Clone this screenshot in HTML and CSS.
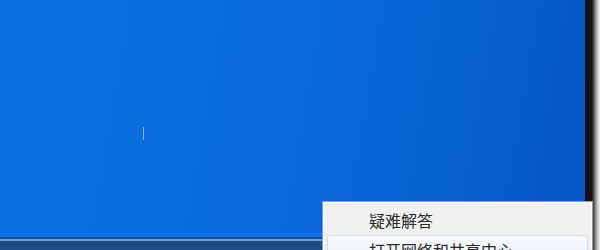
FILE: index.html
```html
<!DOCTYPE html>
<html lang="zh-CN">
<head>
<meta charset="utf-8">
<link rel="stylesheet" href="styles.css">
</head>
<body>
<div class="screen">
  <div class="desktop">
    <div class="wall">
      <span class="cursor"></span>
    </div>
    <div class="taskbar">
      <div class="tb-glow"></div>
      <div class="tb-dark"></div>
      <div class="tb-line"></div>
      <div class="tb-body"></div>
    </div>
  </div>
  <div class="edge"></div>
  <div class="menu">
    <div class="item">疑难解答</div>
    <div class="item hover">打开网络和共享中心</div>
  </div>
</div>
</body>
</html>
```
FILE: styles.css
```css
html, body {
  margin: 0;
  padding: 0;
  background: #000;
}
.screen {
  position: relative;
  width: 600px;
  height: 250px;
  display: flex;
  overflow: hidden;
}
.desktop {
  flex: 1;
  display: flex;
  flex-direction: column;
}
.wall {
  position: relative;
  flex: 1;
  background: linear-gradient(100deg, #0b72e2 0%, #0a6ddc 35%, #0863d3 70%, #0557c4 100%);
}
.cursor {
  position: absolute;
  left: 143px;
  top: 127px;
  width: 1px;
  height: 13px;
  background: #8fb4e8;
}
.taskbar {
  display: flex;
  flex-direction: column;
  height: 18px;
}
.tb-glow {
  height: 5px;
  background: #0d70ea;
}
.tb-dark {
  height: 2px;
  background: #1a4f8c;
}
.tb-line {
  height: 2px;
  background: #7a9cc4;
}
.tb-body {
  flex: 1;
  background: #1d4b85;
}
.edge {
  width: 15px;
  background: linear-gradient(90deg, #111 0%, #141414 45%, #555 60%, #bbb 80%, #f2f2f2 100%);
}
.menu {
  position: absolute;
  left: 322px;
  top: 201px;
  width: 261px;
  height: 60px;
  background: #f0f0f0;
  border: 1px solid #9a9a9a;
  box-shadow: inset 0 0 0 1px #fbfbfb;
  padding: 2px 4px;
  display: flex;
  flex-direction: column;
  font-family: "Noto Sans CJK SC", sans-serif;
  font-size: 16px;
  color: #2a2a2a;
}
.item {
  height: 30px;
  line-height: 30px;
  padding-left: 41px;
  border: 1px solid transparent;
  border-radius: 3px;
  box-sizing: border-box;
}
.item.hover {
  margin-top: 1px;
  border-color: #c9dcef;
  background: linear-gradient(#f7fafd, #eaf1f9);
  line-height: 28px;
}
```
